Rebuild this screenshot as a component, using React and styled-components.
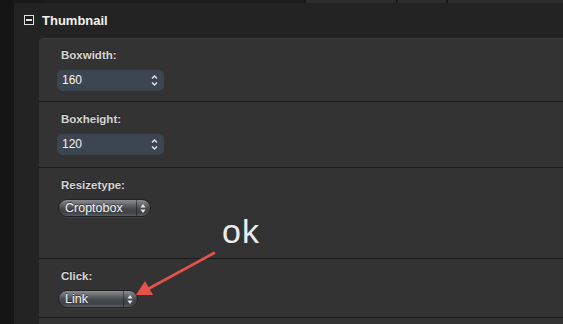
import React from "react";
import styled, { createGlobalStyle } from "styled-components";

const GlobalStyle = createGlobalStyle`
  html, body {
    margin: 0;
    padding: 0;
    background: #141414;
    font-family: "Liberation Sans", Arial, sans-serif;
  }
`;

const FIELDS = [
  { label: "Boxwidth:", type: "number", value: "160", height: 64 },
  { label: "Boxheight:", type: "number", value: "120", height: 66 },
  { label: "Resizetype:", type: "select", value: "Croptobox", width: 93, height: 91 },
  { label: "Click:", type: "select", value: "Link", width: 80, height: 59 },
  { label: "", type: "none", height: 40 },
];

const Stepper = () => (
  <svg width="7" height="13" viewBox="0 0 7 13">
    <path d="M1 4.5 L3.5 2 L6 4.5" stroke="#e8e8e8" strokeWidth="1.3" fill="none" />
    <path d="M1 8.5 L3.5 11 L6 8.5" stroke="#e8e8e8" strokeWidth="1.3" fill="none" />
  </svg>
);

const SelectArrows = () => (
  <svg width="6" height="11" viewBox="0 0 6 11">
    <path d="M3 1 L5.6 4.6 L0.4 4.6 Z" fill="#e6e6e6" />
    <path d="M3 10 L5.6 6.4 L0.4 6.4 Z" fill="#e6e6e6" />
  </svg>
);

const App = () => {
  return (
    <>
      <GlobalStyle />
      <Page>
        <LeftStrip />
        <Panel>
          <TopStrip>
            <Tab $w={260} />
            <Tab $w={90} $light />
            <Tab $w={48} $light />
            <Tab $w={140} $light />
          </TopStrip>
          <Header>
            <Toggle>
              <span />
            </Toggle>
            <Title>Thumbnail</Title>
          </Header>
          <Body>
            {FIELDS.map((field, index) => (
              <Row key={index} $height={field.height}>
                {field.label && <Label>{field.label}</Label>}
                {field.type === "number" && (
                  <NumberInput>
                    <span>{field.value}</span>
                    <Stepper />
                  </NumberInput>
                )}
                {field.type === "select" && (
                  <Select $width={field.width}>
                    <SelectValue>{field.value}</SelectValue>
                    <SelectButton>
                      <SelectArrows />
                    </SelectButton>
                  </Select>
                )}
              </Row>
            ))}
          </Body>
        </Panel>
        <Note>ok</Note>
        <Arrow width="563" height="324" viewBox="0 0 563 324">
          <line x1="214" y1="253" x2="148" y2="289" stroke="#e5524b" strokeWidth="2.6" strokeLinecap="round" />
          <path d="M136 295 L145 281 L153 295 Z" fill="#e5524b" />
        </Arrow>
      </Page>
    </>
  );
};

const Page = styled.div`
  position: relative;
  display: flex;
  width: 563px;
  height: 324px;
  overflow: hidden;
  background: #141414;
`;

const LeftStrip = styled.div`
  width: 14px;
  flex-shrink: 0;
  background: #151515;
`;

const Panel = styled.div`
  flex: 1;
  display: flex;
  flex-direction: column;
  min-height: 0;
  background: #232323;
  border-top-left-radius: 6px;
`;

const TopStrip = styled.div`
  display: flex;
  flex-shrink: 0;
  height: 3px;
  background: #181818;
  gap: 2px;
  padding-left: 30px;
`;

const Tab = styled.div`
  width: ${(p) => p.$w}px;
  background: ${(p) => (p.$light ? "#2c2c2c" : "#1c1c1c")};
`;

const Header = styled.div`
  display: flex;
  flex-shrink: 0;
  align-items: center;
  gap: 8px;
  height: 35px;
  padding-left: 10px;
  border-right: 1px solid #2e2e2e;
`;

const Toggle = styled.div`
  width: 8px;
  height: 8px;
  border: 1px solid #e0e0e0;
  background: #1c1c1c;
  display: flex;
  align-items: center;
  justify-content: center;
  margin-top: -1px;

  span {
    width: 6px;
    height: 1.5px;
    background: #e0e0e0;
  }
`;

const Title = styled.div`
  color: #f2f2f2;
  font-size: 13px;
  font-weight: bold;
`;

const Body = styled.div`
  flex: 1;
  min-height: 0;
  overflow: hidden;
  margin-left: 25px;
  background: #333333;
  border-top-left-radius: 5px;
  box-shadow: inset 0 1px 0 #3a3a3a;
`;

const Row = styled.div`
  box-sizing: border-box;
  height: ${(p) => p.$height}px;
  padding: 10px 0 0 18px;
  border-bottom: 1px solid #1c1c1c;
  display: flex;
  flex-direction: column;
  align-items: flex-start;
  gap: 7px;
`;

const Label = styled.div`
  margin-left: 4px;
  font-size: 11.5px;
  line-height: 14px;
  font-weight: bold;
  color: #d6d6d6;
  text-shadow: 0 -1px 0 #1e1e1e;
`;

const NumberInput = styled.div`
  box-sizing: border-box;
  width: 107px;
  height: 22px;
  display: flex;
  align-items: center;
  justify-content: space-between;
  padding: 0 6px 0 5px;
  background: #3c4550;
  border-radius: 5px;
  box-shadow: inset 0 1px 1px rgba(0, 0, 0, 0.25);
  color: #f4f4f4;
  font-size: 12px;
`;

const Select = styled.div`
  box-sizing: border-box;
  width: ${(p) => p.$width}px;
  height: 18px;
  display: flex;
  align-items: center;
  border-radius: 9px;
  border: 1px solid #202020;
  background: linear-gradient(
    to bottom,
    #8a8c90 0%,
    #5d6064 35%,
    #45484c 55%,
    #3f4246 80%,
    #5a5d61 100%
  );
  box-shadow: 0 1px 0 rgba(255, 255, 255, 0.06);
  margin-left: 1px;
`;

const SelectValue = styled.div`
  flex: 1;
  padding-left: 6px;
  color: #f6f6f6;
  font-size: 12.5px;
  text-shadow: 0 -1px 0 rgba(0, 0, 0, 0.5);
`;

const SelectButton = styled.div`
  width: 12px;
  height: 100%;
  display: flex;
  align-items: center;
  justify-content: center;
  border-left: 1px solid rgba(30, 30, 30, 0.6);
  padding-right: 1px;
`;

const Note = styled.div`
  position: absolute;
  left: 222px;
  top: 212px;
  font-size: 34px;
  letter-spacing: 1px;
  color: #ececec;
`;

const Arrow = styled.svg`
  position: absolute;
  left: 0;
  top: 0;
  pointer-events: none;
`;

export default App;
